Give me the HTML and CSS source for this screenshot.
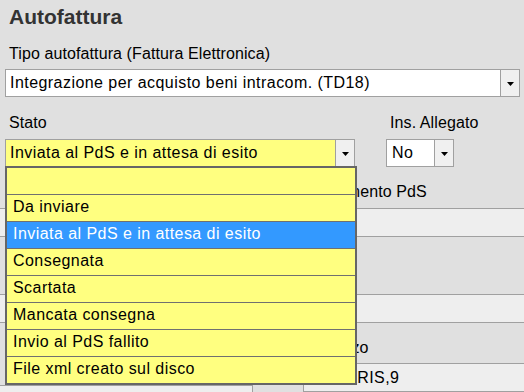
FILE: index.html
```html
<!DOCTYPE html>
<html lang="it">
<head>
<meta charset="utf-8">
<title>Autofattura</title>
<link rel="stylesheet" href="styles.css">
</head>
<body>
<div class="page">
  <h1 class="title">Autofattura</h1>
  <div class="label label-tipo">Tipo autofattura (Fattura Elettronica)</div>
  <div class="combo combo-tipo">
    <span class="combo-text">Integrazione per acquisto beni intracom. (TD18)</span>
    <span class="combo-btn"><svg width="7" height="4" viewBox="0 0 7 4"><polygon points="0,0 7,0 3.5,4" fill="#000"/></svg></span>
  </div>
  <div class="stato-row">
    <div class="col-stato">
      <div class="label label-stato">Stato</div>
      <div class="combo combo-yellow">
        <span class="combo-text">Inviata al PdS e in attesa di esito</span>
        <span class="combo-btn"><svg width="7" height="4" viewBox="0 0 7 4"><polygon points="0,0 7,0 3.5,4" fill="#000"/></svg></span>
        <ul class="dropdown">
          <li class="opt">&nbsp;</li>
          <li class="opt">Da inviare</li>
          <li class="opt opt-active">Inviata al PdS e in attesa di esito</li>
          <li class="opt">Consegnata</li>
          <li class="opt">Scartata</li>
          <li class="opt">Mancata consegna</li>
          <li class="opt">Invio al PdS fallito</li>
          <li class="opt">File xml creato sul disco</li>
        </ul>
      </div>
    </div>
    <div class="col-alleg">
      <div class="label label-stato">Ins. Allegato</div>
      <div class="combo combo-no">
        <span class="combo-text">No</span>
        <span class="combo-btn"><svg width="7" height="4" viewBox="0 0 7 4"><polygon points="0,0 7,0 3.5,4" fill="#000"/></svg></span>
      </div>
    </div>
  </div>
</div>
<div class="lower">
  <div class="lower-label">Data aggiornamento PdS</div>
  <div class="field field-a"></div>
  <div class="lower-gap"></div>
  <div class="field field-b"></div>
  <div class="lower-cols">
    <div class="col-left">
      <div class="col-left-spacer"></div>
      <div class="field-left"></div>
    </div>
    <div class="col-mid"></div>
    <div class="col-right">
      <div class="right-label">Indirizzo</div>
      <div class="field field-c">VIA PARIS,9</div>
    </div>
  </div>
</div>
</body>
</html>
```
FILE: styles.css
```css
html, body {
  margin: 0;
  padding: 0;
}
body {
  background: #e0e0e0;
  font-family: "Liberation Sans", Arial, sans-serif;
  font-size: 16px;
  color: #000;
  width: 524px;
  height: 392px;
  overflow: hidden;
}
.page {
  padding: 0 5px;
}
.title {
  margin: 5px 0 0 0;
  padding-left: 4px;
  font-size: 21px;
  line-height: 24px;
  font-weight: bold;
  color: #333;
}
.label {
  padding-left: 4px;
  line-height: 18px;
  height: 18px;
  white-space: nowrap;
  letter-spacing: 0.1px;
}
.label-tipo {
  margin-top: 16px;
}
.combo {
  position: relative;
  box-sizing: border-box;
  height: 28px;
  border: 1px solid #a0a0a0;
  background: #fff;
  display: flex;
  align-items: stretch;
}
.combo-tipo {
  margin-top: 6px;
  width: 515px;
}
.combo-text {
  flex: 1;
  padding-left: 4px;
  line-height: 26px;
  letter-spacing: 0.45px;
  white-space: nowrap;
  overflow: hidden;
}
.combo-btn {
  width: 18px;
  border-left: 1px solid #a0a0a0;
  background: #f0f0f0;
  display: flex;
  align-items: center;
  justify-content: center;
}
.combo-btn svg {
  display: block;
  margin-top: 1px;
}
.stato-row {
  display: flex;
  gap: 31px;
}
.label-stato {
  margin-top: 17px;
  margin-bottom: 7px;
}
.col-stato {
  width: 350px;
}
.col-alleg {
  width: 68px;
}
.combo-yellow {
  background: #ffff80;
}
.combo-no .combo-text {
  padding-left: 5px;
}
.dropdown {
  position: absolute;
  top: 100%;
  left: -1px;
  width: 352px;
  box-sizing: border-box;
  margin: 0;
  padding: 0;
  list-style: none;
  border: 2px solid #666;
  background: #ffff80;
  z-index: 10;
}
.opt {
  height: 26px;
  line-height: 24px;
  padding-left: 6px;
  letter-spacing: 0.45px;
  border-bottom: 1px solid #707070;
  white-space: nowrap;
}
.opt:last-child {
  border-bottom: none;
}
.opt-active {
  background: #3399ff;
  color: #fff;
}
.lower {
  width: 524px;
}
.lower-label {
  box-sizing: border-box;
  height: 41px;
  padding-top: 16px;
  padding-left: 245px;
  line-height: 18px;
  letter-spacing: 0.1px;
  white-space: nowrap;
}
.field {
  box-sizing: border-box;
  height: 29px;
  background: #eeeeee;
  border-top: 1px solid #a0a0a0;
  border-bottom: 1px solid #a0a0a0;
}
.lower-gap {
  height: 57px;
}
.lower-cols {
  display: flex;
}
.col-left {
  width: 253px;
}
.col-left-spacer {
  height: 62px;
}
.field-left {
  box-sizing: border-box;
  height: 20px;
  background: #eeeeee;
  border-top: 1px solid #a0a0a0;
  border-right: 1px solid #a0a0a0;
}
.col-mid {
  width: 50px;
}
.col-right {
  flex: 1;
}
.right-label {
  box-sizing: border-box;
  height: 40px;
  padding-top: 16px;
  padding-left: 5px;
  line-height: 18px;
  letter-spacing: 0.1px;
}
.field-c {
  border-left: 1px solid #a0a0a0;
  padding-left: 1px;
  line-height: 27px;
  letter-spacing: 0.45px;
}
```
